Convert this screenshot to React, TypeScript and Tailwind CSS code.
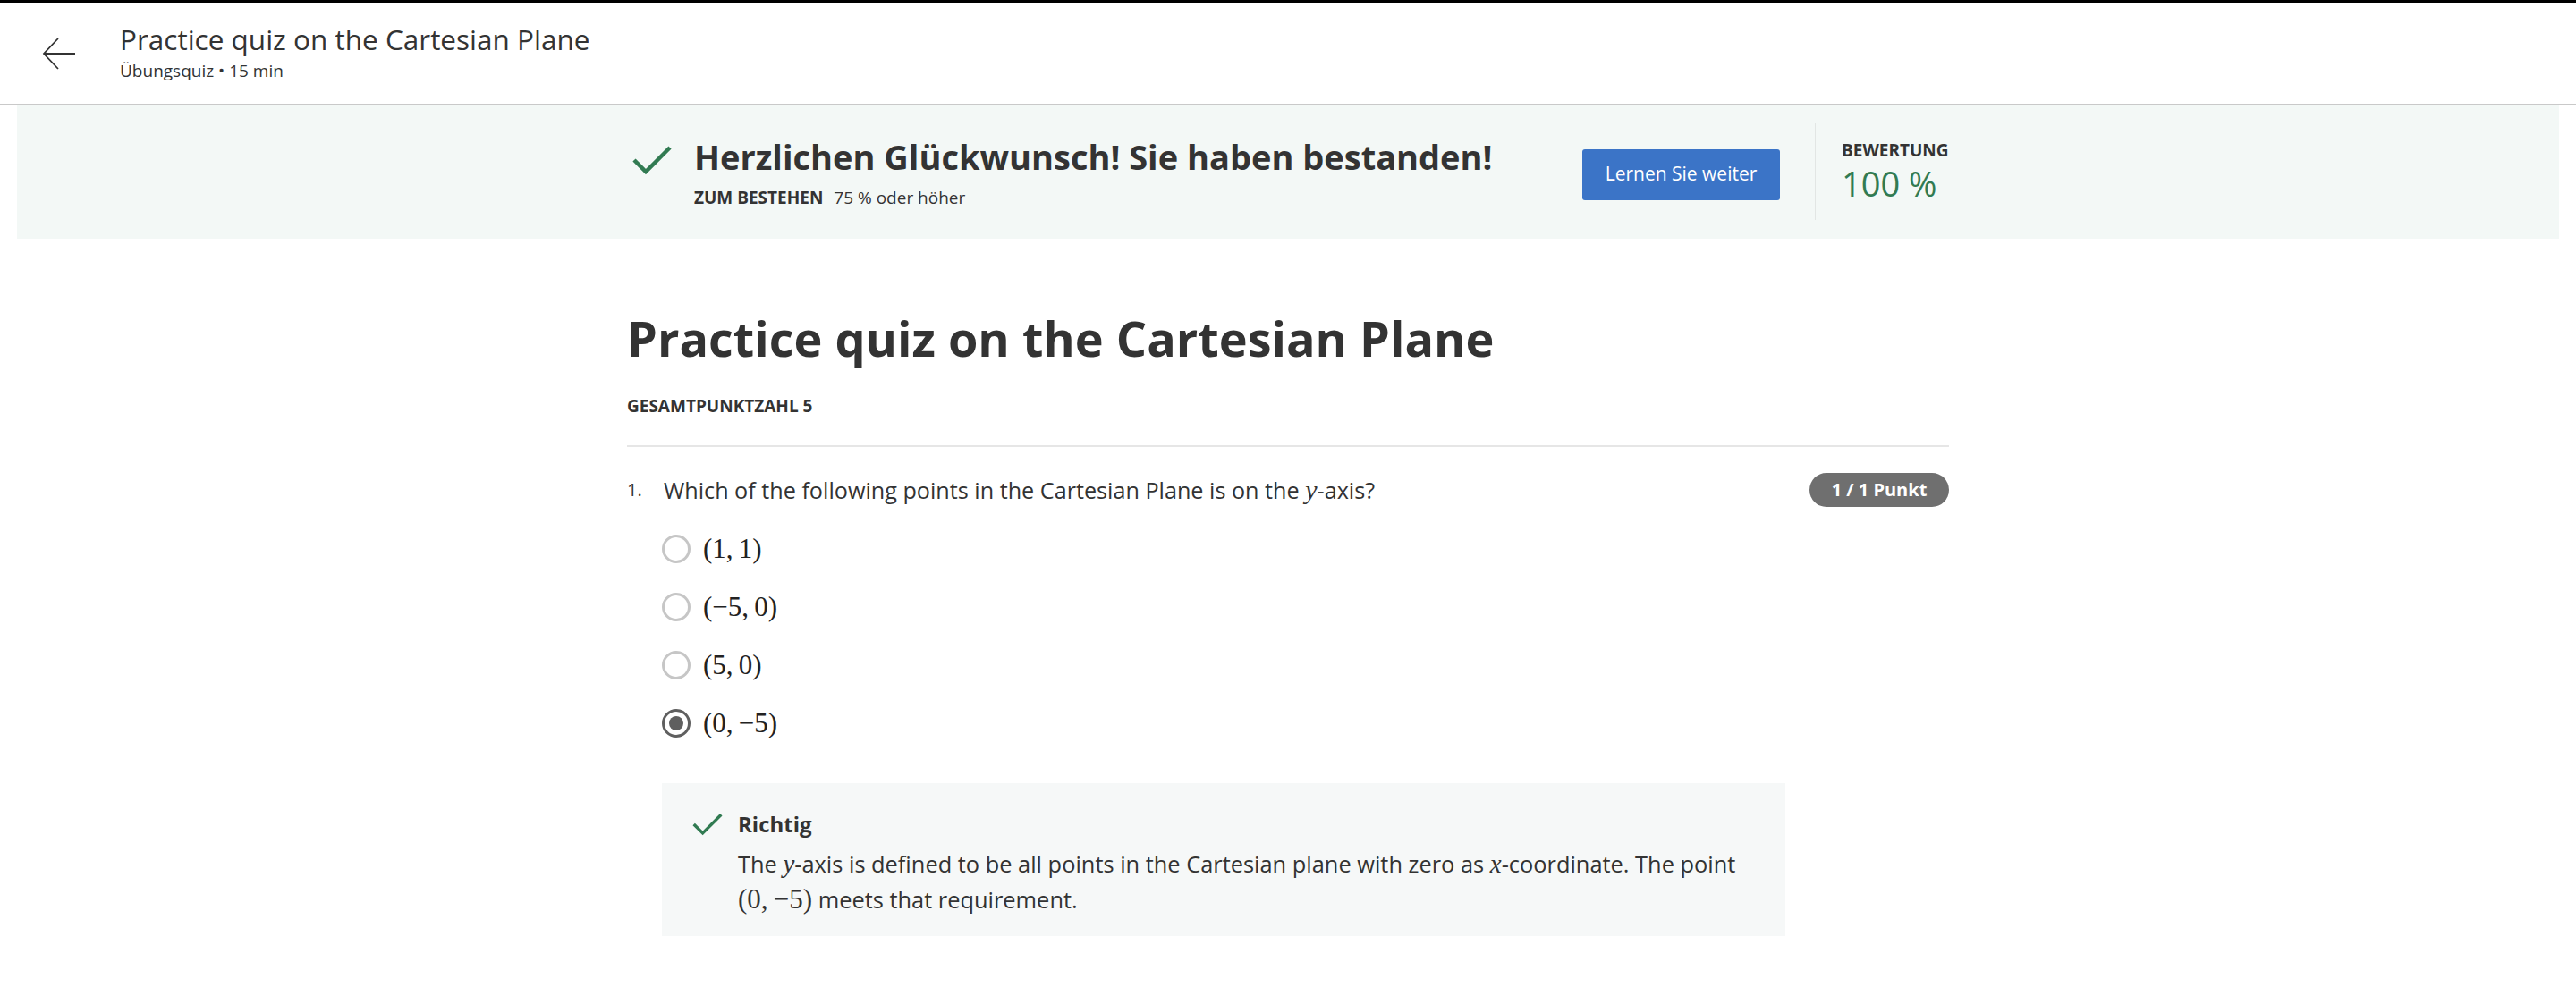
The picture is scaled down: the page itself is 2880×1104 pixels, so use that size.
import React from "react";

const font = { fontFamily: '"Open Sans", "Noto Sans", sans-serif' };

function Math({ children, className = "" }: { children: React.ReactNode; className?: string }) {
  return (
    <span className={"whitespace-nowrap font-['Liberation_Serif',serif] leading-none " + className}>{children}</span>
  );
}

function Radio({ checked }: { checked?: boolean }) {
  return checked ? (
    <span className="flex h-[32px] w-[32px] shrink-0 items-center justify-center rounded-full border-[3px] border-[#5f5f5f]">
      <span className="h-[16px] w-[16px] rounded-full bg-[#5f5f5f]" />
    </span>
  ) : (
    <span className="h-[32px] w-[32px] shrink-0 rounded-full border-[3px] border-[#c6c6c6]" />
  );
}

function Check({ className = "" }: { className?: string }) {
  return (
    <svg viewBox="0 0 44 34" className={className} fill="none">
      <polyline points="2,17 15,30 42,3" stroke="#317b52" strokeWidth="4.5" strokeLinecap="butt" strokeLinejoin="miter" />
    </svg>
  );
}

export default function App() {
  const options: { label: React.ReactNode; checked?: boolean }[] = [
    { label: <>(1,&#8201;1)</> },
    { label: <>(−5,&#8201;0)</> },
    { label: <>(5,&#8201;0)</> },
    { label: <>(0,&#8201;−5)</>, checked: true },
  ];
  return (
    <div style={font} className="min-h-[1104px] w-full border-t-[3px] border-black bg-white text-[#333333]">
      {/* Header */}
      <header className="flex h-[114px] items-start border-b border-[#c9c9c9] pl-[47px] pt-[21px]">
        <svg viewBox="0 0 38 38" className="mt-[17px] h-[38px] w-[38px]" fill="none">
          <path d="M37 19H2M18 2L2 19l16 17" stroke="#333" strokeWidth="1.8" />
        </svg>
        <div className="ml-[49px] flex flex-col">
          <div className="text-[31.5px] leading-[40px] text-[#333]">Practice quiz on the Cartesian Plane</div>
          <div className="mt-[2px] text-[19px] leading-[26px] text-[#333]">Übungsquiz • 15 min</div>
        </div>
      </header>

      {/* Banner */}
      <div className="mx-[19px] flex h-[150px] items-center bg-[#f3f8f6]">
        <div className="mx-auto flex w-[1478px] items-center">
          <Check className="ml-[6px] mt-[-26px] h-[34px] w-[44px] shrink-0" />
          <div className="ml-[25px] flex flex-col">
            <div className="text-[38px] font-bold leading-[48px] text-[#333]">
              Herzlichen Glückwunsch! Sie haben bestanden!
            </div>
            <div className="mt-[10px] text-[19px] leading-[24px] text-[#333]">
              <span className="font-bold">ZUM BESTEHEN</span>
              <span className="ml-[12px]">75 % oder höher</span>
            </div>
          </div>
          <div className="flex-1" />
          <button className="mt-[6px] h-[57px] w-[221px] rounded-[3px] bg-[#3b74c7] text-[21px] text-white">
            Lernen Sie weiter
          </button>
          <div className="ml-[39px] h-[108px] w-px bg-[#e2e6e4]" />
          <div className="ml-[29px] flex w-[120px] flex-col">
            <div className="text-[19px] font-bold leading-[24px] text-[#333]">BEWERTUNG</div>
            <div className="mt-[2px] text-[38px] leading-[46px] text-[#317b52]">100 %</div>
          </div>
        </div>
      </div>

      {/* Main */}
      <main className="mx-auto w-[1478px] pt-[79px]">
        <h1 className="text-[54px] font-bold leading-[64px] text-[#333]">Practice quiz on the Cartesian Plane</h1>
        <div className="mt-[32px] text-[19px] font-bold leading-[24px] text-[#333]">GESAMTPUNKTZAHL 5</div>
        <div className="mt-[32px] h-[2px] bg-[#e6e6e6]" />

        <div className="mt-[29px] flex h-[38px] items-center">
          <div className="w-[41px] text-[20px] leading-[38px] text-[#333]">1.</div>
          <div className="flex-1 text-[25.2px] leading-[38px] text-[#333]">
            Which of the following points in the Cartesian Plane is on the <Math className="italic text-[30px]">y</Math>-axis?
          </div>
          <div className="flex h-[38px] w-[156px] items-center justify-center rounded-full bg-[#6f6f6f] text-[20px] font-bold text-white">
            1 / 1 Punkt
          </div>
        </div>

        <div className="mt-[14px] flex flex-col pl-[39px]">
          {options.map((o, i) => (
            <div key={i} className="flex h-[65px] items-center">
              <Radio checked={o.checked} />
              <Math className="ml-[14px] text-[31px] text-[#222]">{o.label}</Math>
            </div>
          ))}
        </div>

        <div className="ml-[39px] mt-[35px] w-[1256px] bg-[#f6f8f8] pb-[21px] pl-[34px] pr-[42px] pt-[31px]">
          <div className="flex h-[30px] items-center">
            <Check className="h-[26px] w-[34px] shrink-0" />
            <div className="ml-[17px] text-[24px] font-bold leading-[30px] text-[#333]">Richtig</div>
          </div>
          <div className="ml-[51px] mt-[9px] text-[25.4px] leading-[40px] text-[#333]">
            The <Math className="italic text-[29px]">y</Math>-axis is defined to be all points in the Cartesian plane with zero as{" "}
            <Math className="italic text-[29px]">x</Math>-coordinate. The point{" "}
            <Math className="text-[31px]">(0,&#8201;−5)</Math> meets that requirement.
          </div>
        </div>
      </main>
    </div>
  );
}
